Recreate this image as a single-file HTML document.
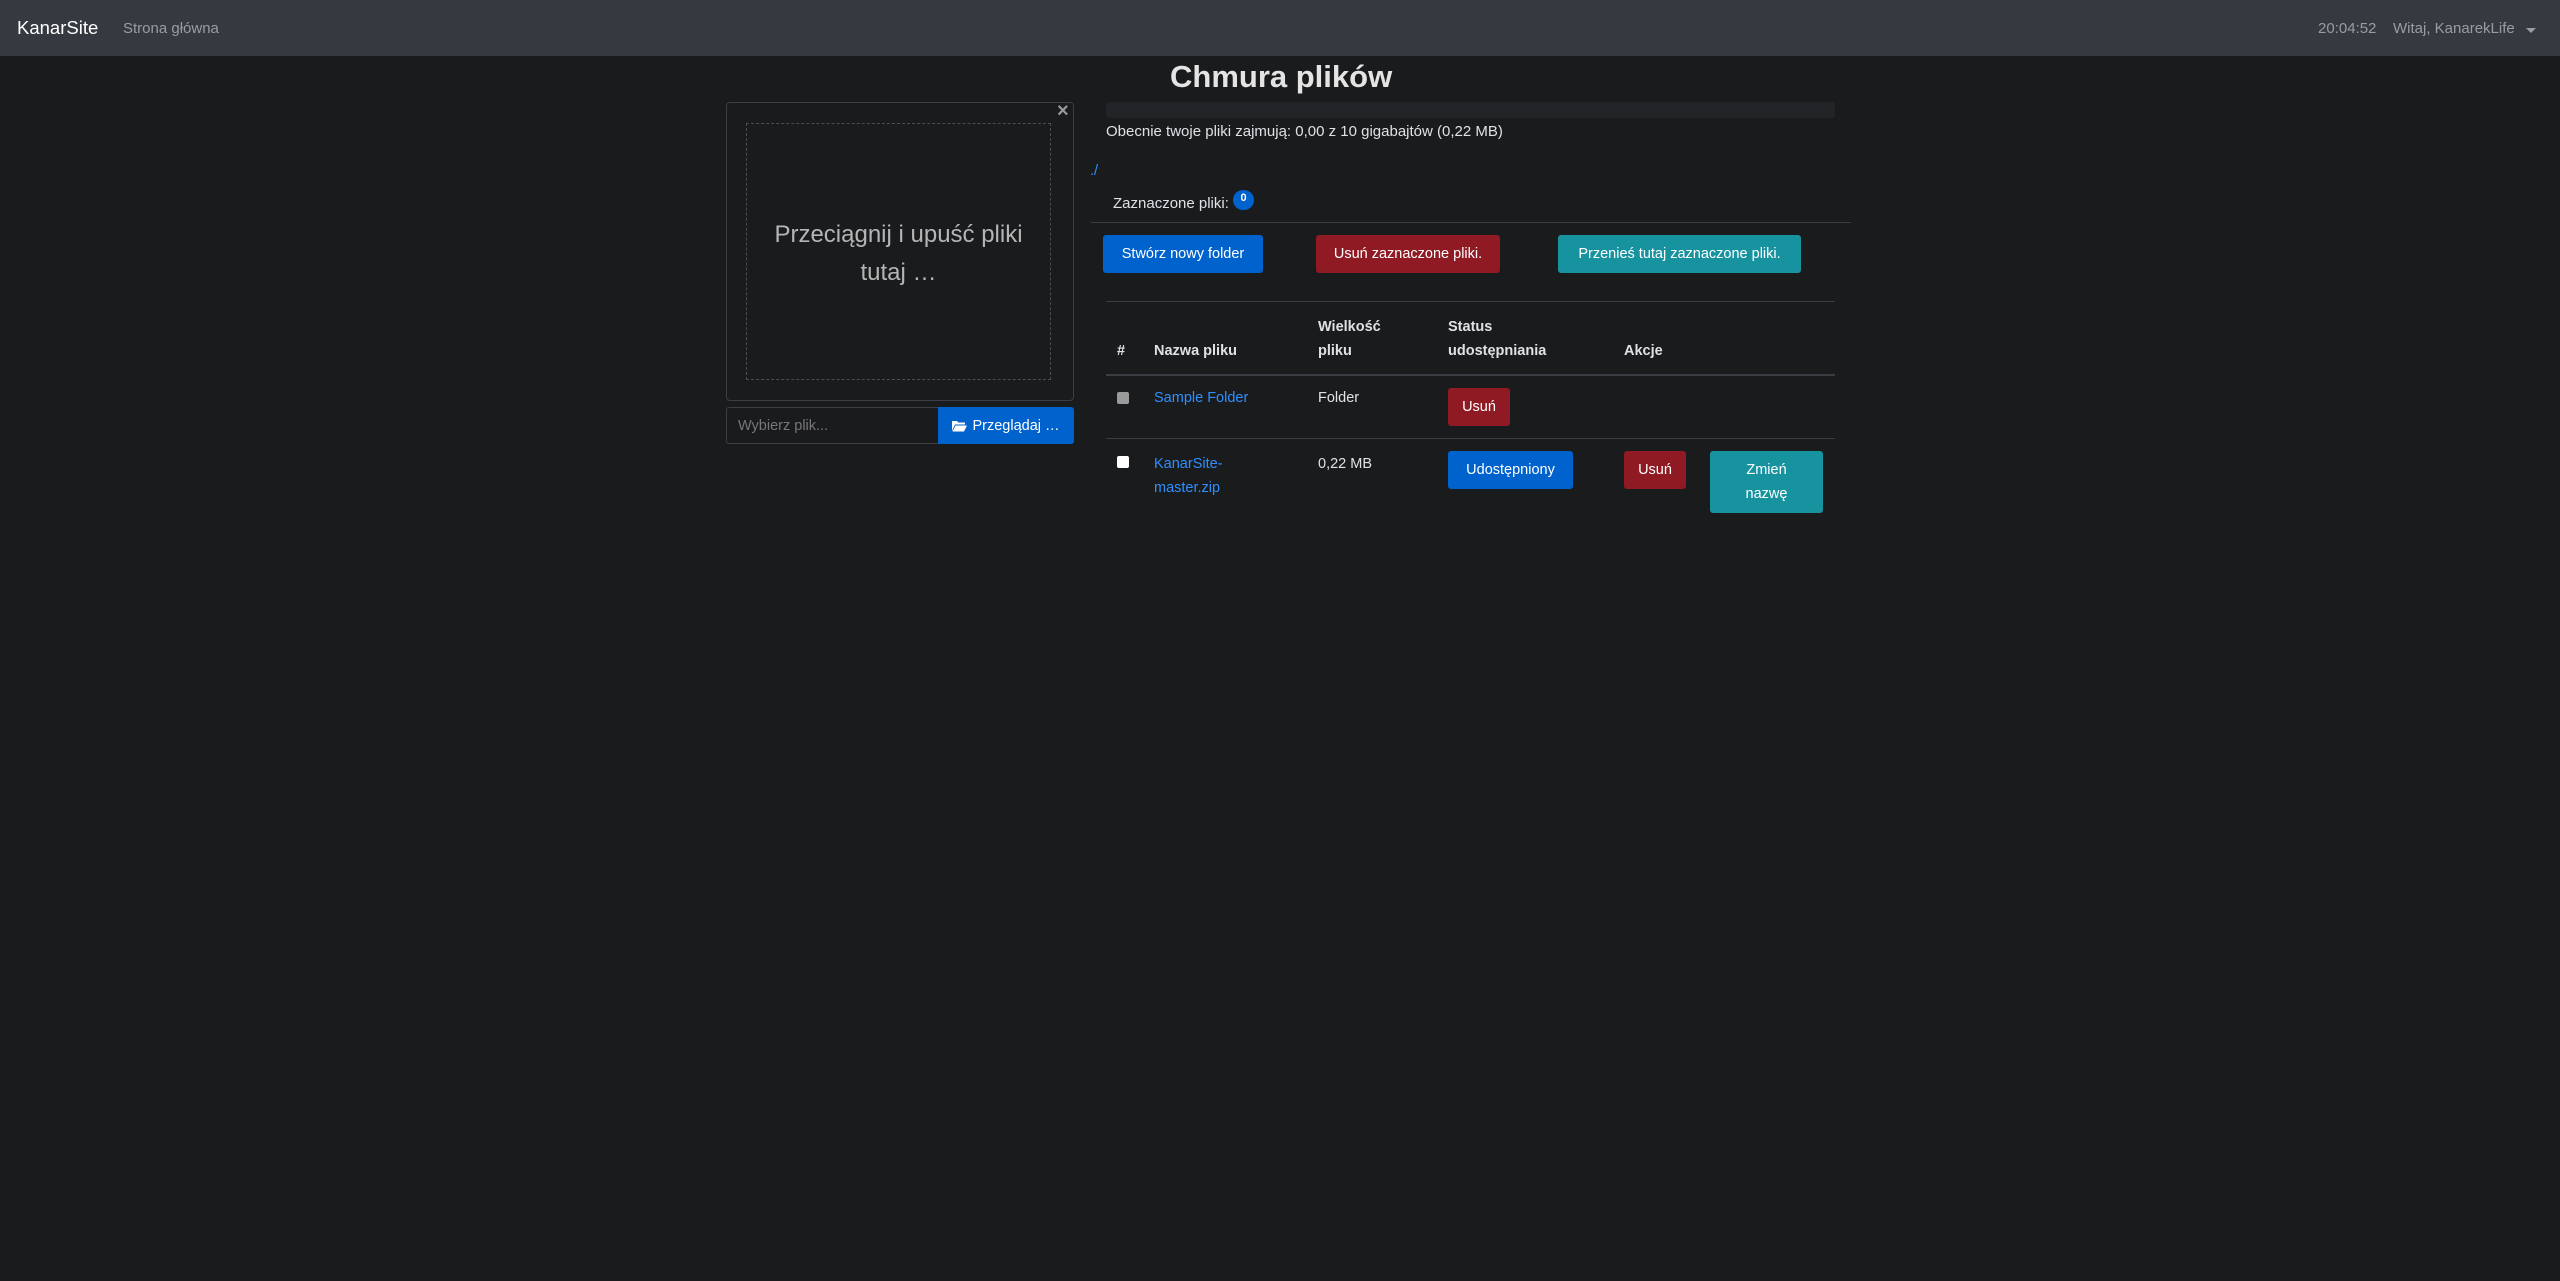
<!DOCTYPE html>
<html><head><meta charset="utf-8"><style>
*{box-sizing:border-box;margin:0;padding:0}
html,body{width:2560px;height:1281px;background:#1a1b1d;overflow:hidden;font-family:"Liberation Sans",sans-serif;color:#dee2e6;font-size:14.5px}
.abs{position:absolute;white-space:nowrap}
.nav{position:absolute;left:0;top:0;width:2560px;height:56px;background:#343a40}
.btn{position:absolute;color:#fff;border-radius:3px;display:flex;align-items:center;justify-content:center;text-align:center;font-size:14.5px;line-height:24px}
.blue{background:#0062cc}.red{background:#8f1a24}.teal{background:#17929f}
.th{font-weight:bold;line-height:24px}
a{color:#2f8fff;text-decoration:none}
.line{position:absolute;background:#3a3d41;height:1px}
.cb{position:absolute;width:12px;height:12px;border-radius:2px}
</style></head><body>
<div class="nav">
<div class="abs" style="left:17px;top:17px;font-size:18.5px;color:#fff">KanarSite</div>
<div class="abs" style="left:123px;top:20px;font-size:15px;color:#9a9da0">Strona główna</div>
<div class="abs" style="left:2318px;top:20px;font-size:15px;color:#9a9da0">20:04:52</div>
<div class="abs" style="left:2393px;top:20px;font-size:15px;color:#9a9da0">Witaj, KanarekLife</div>
<div class="abs" style="left:2526px;top:28px;width:0;height:0;border-left:5px solid transparent;border-right:5px solid transparent;border-top:5px solid #9a9da0"></div>
</div>

<div class="abs" style="left:1170px;top:59px;font-size:31px;font-weight:bold;color:#e4e4e4">Chmura plików</div>

<div class="abs" style="left:726px;top:102px;width:348px;height:299px;border:1px solid #3c3f43;border-radius:4px"></div>
<div class="abs" style="left:1057px;top:100px;font-size:20px;font-weight:bold;color:#9a9a9a">×</div>
<div class="abs" style="left:746px;top:123px;width:305px;height:257px;border:1px dashed #4a4d51"></div>
<div class="abs" style="left:746px;top:216px;width:305px;text-align:center;font-size:24px;line-height:38px;color:#b5b5b5;white-space:normal">Przeciągnij i upuść pliki<br>tutaj …</div>

<div class="abs" style="left:726px;top:407px;width:348px;height:37px;border:1px solid #3c3f43;border-radius:3px"></div>
<div class="abs" style="left:738px;top:418px;color:#777;font-size:14.5px">Wybierz plik...</div>
<div class="btn blue" style="left:938px;top:407px;width:136px;height:37px;border-radius:0 3px 3px 0">
<svg width="15" height="12" viewBox="0 0 15 12" style="margin-right:5px"><path d="M0 1h5l1.5 1.5H13v2H3L0 11z" fill="#fff"/><path d="M3.5 5.5H15L12 11.5H0.5z" fill="#fff"/></svg>Przeglądaj …</div>

<div class="abs" style="left:1106px;top:102px;width:729px;height:16px;background:#222427;border-radius:3px"></div>
<div class="abs" style="left:1106px;top:123px;font-size:15px">Obecnie twoje pliki zajmują: 0,00 z 10 gigabajtów (0,22 MB)</div>
<div class="abs" style="left:1090px;top:163px"><a>./</a></div>
<div class="abs" style="left:1113px;top:195px;font-size:15px">Zaznaczone pliki:</div>
<div class="abs" style="left:1233px;top:190px;width:21px;height:20px;border-radius:10px;background:#0062cc;color:#fff;font-size:11px;font-weight:bold;text-align:center;line-height:16px">0</div>
<div class="line" style="left:1091px;top:222px;width:760px"></div>

<div class="btn blue" style="left:1103px;top:235px;width:160px;height:38px">Stwórz nowy folder</div>
<div class="btn red" style="left:1316px;top:235px;width:184px;height:38px">Usuń zaznaczone pliki.</div>
<div class="btn teal" style="left:1558px;top:235px;width:243px;height:38px">Przenieś tutaj zaznaczone pliki.</div>

<div class="line" style="left:1106px;top:301px;width:729px"></div>
<div class="abs th" style="left:1117px;top:339px">#</div>
<div class="abs th" style="left:1154px;top:339px">Nazwa pliku</div>
<div class="abs th" style="left:1318px;top:315px">Wielkość<br>pliku</div>
<div class="abs th" style="left:1448px;top:315px">Status<br>udostępniania</div>
<div class="abs th" style="left:1624px;top:339px">Akcje</div>
<div class="line" style="left:1106px;top:374px;width:729px;height:2px"></div>

<div class="cb" style="left:1117px;top:392px;background:#9a9a9a"></div>
<div class="abs" style="left:1154px;top:390px"><a>Sample Folder</a></div>
<div class="abs" style="left:1318px;top:390px">Folder</div>
<div class="btn red" style="left:1448px;top:388px;width:62px;height:38px">Usuń</div>
<div class="line" style="left:1106px;top:438px;width:729px"></div>

<div class="cb" style="left:1117px;top:456px;background:#fff"></div>
<div class="abs" style="left:1154px;top:452px;line-height:24px"><a>KanarSite-<br>master.zip</a></div>
<div class="abs" style="left:1318px;top:452px;line-height:24px">0,22 MB</div>
<div class="btn blue" style="left:1448px;top:451px;width:125px;height:38px">Udostępniony</div>
<div class="btn red" style="left:1624px;top:451px;width:62px;height:38px">Usuń</div>
<div class="btn teal" style="left:1710px;top:451px;width:113px;height:62px">Zmień<br>nazwę</div>
</body></html>
